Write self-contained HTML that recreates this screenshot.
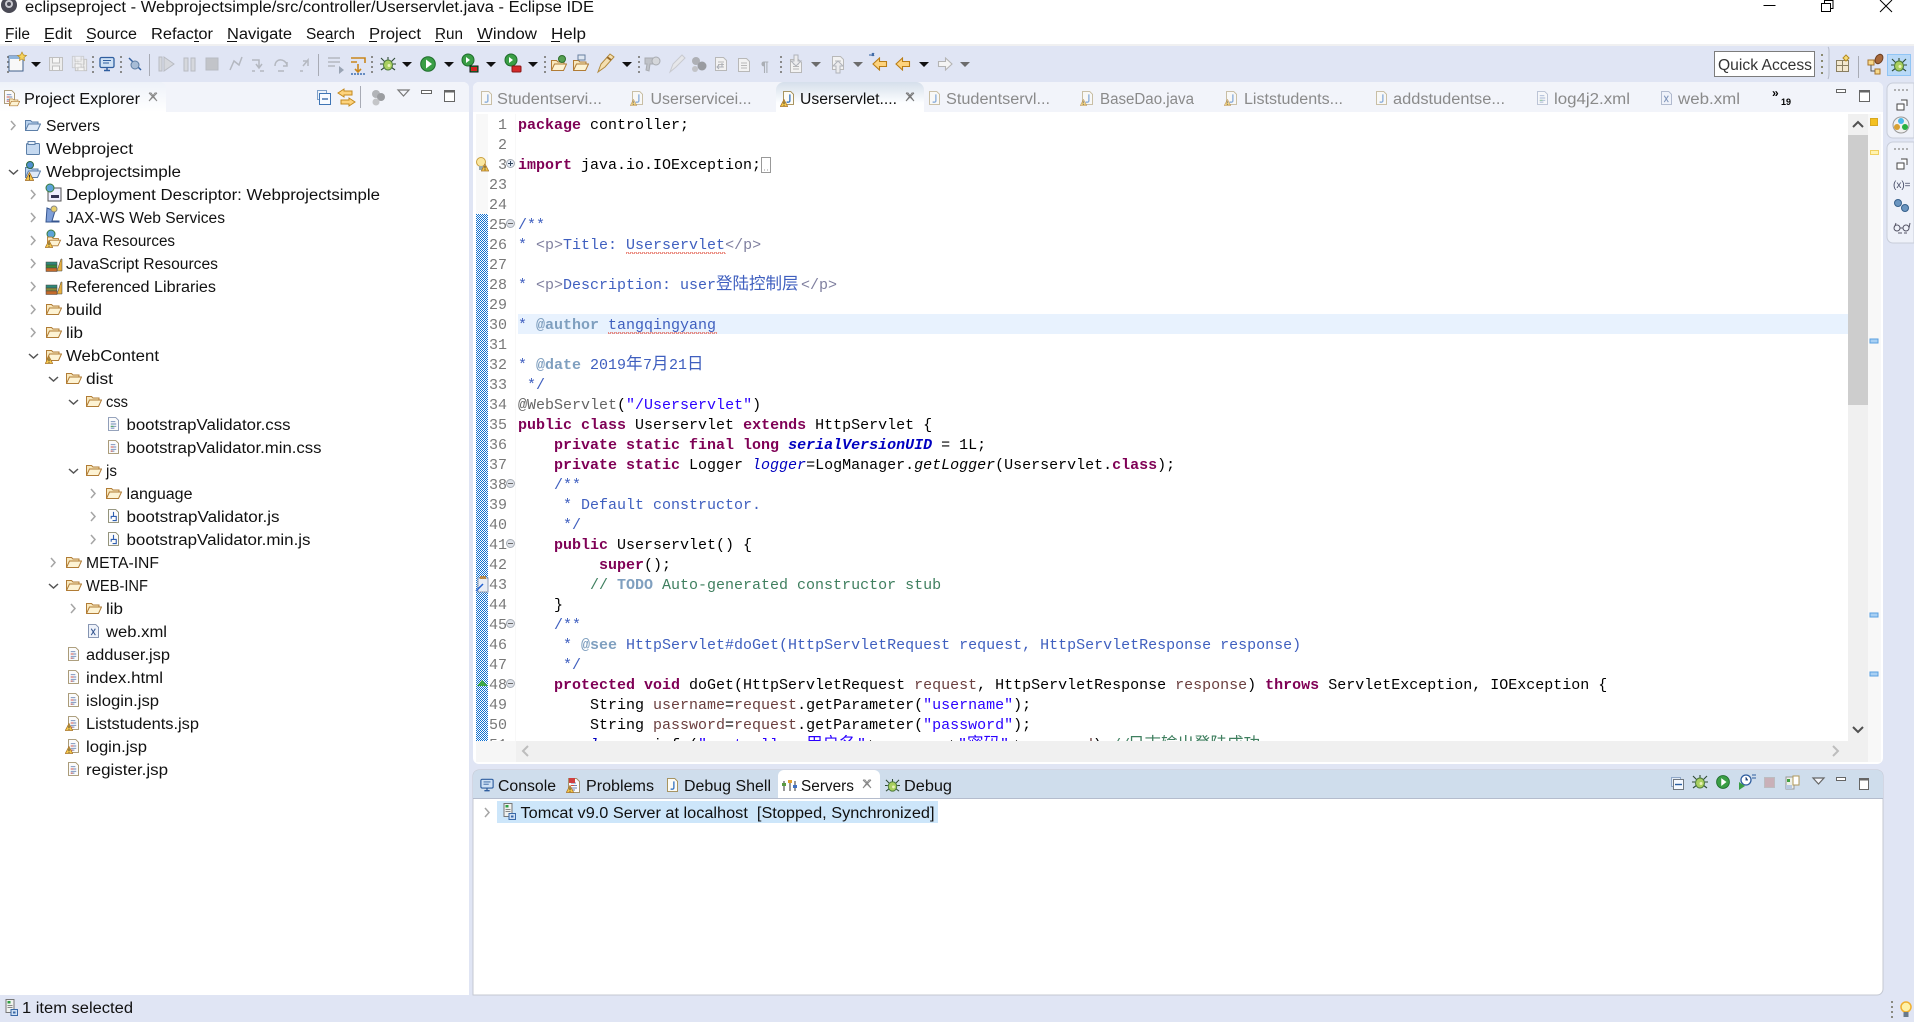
<!DOCTYPE html>
<html><head><meta charset="utf-8"><title>Eclipse IDE</title>
<style>
html,body{margin:0;padding:0;background:#e0e5f4;overflow:hidden}
svg{display:block}
.u{font-family:"Liberation Sans","Noto Sans CJK SC",sans-serif;font-size:15.5px;fill:#111}
.g{fill:#8a8a8a}
.c{font-family:"Liberation Mono","Noto Sans CJK SC",monospace;font-size:15px;fill:#000;white-space:pre}
.n{fill:#787878;text-anchor:end}
.k{fill:#7f0055;font-weight:bold}.j{fill:#3f5fbf}.t{fill:#7f9fbf;font-weight:bold}.h{fill:#7f7f9f}
.f{fill:#0000c0}.s{fill:#2a00ff}.m{fill:#3f7f5f}.v{fill:#6a3e3e}.a{fill:#646464}.i{font-style:italic}.b{font-weight:bold}
.cj{font-family:"Noto Sans CJK SC",sans-serif;font-size:16.5px}
</style></head><body>
<svg xmlns="http://www.w3.org/2000/svg" width="1914" height="1022" viewBox="0 0 1914 1022">
<defs>
<pattern id="dith" width="2" height="2" patternUnits="userSpaceOnUse"><rect width="2" height="2" fill="#fff"/><rect width="1" height="1" fill="#0f6fd0"/><rect x="1" y="1" width="1" height="1" fill="#0f6fd0"/></pattern>
<pattern id="sq" width="4" height="2" patternUnits="userSpaceOnUse"><path d="M0 2L1 0 2 0 3 2 4 2" fill="none" stroke="#e25a4a" stroke-width=".8"/></pattern>
<linearGradient id="act" x1="0" y1="0" x2="0" y2="1"><stop offset="0" stop-color="#d5dfeb"/><stop offset=".7" stop-color="#fdfeff"/><stop offset="1" stop-color="#fff"/></linearGradient>
<linearGradient id="act2" x1="0" y1="0" x2="0" y2="1"><stop offset="0" stop-color="#eef2f9"/><stop offset="1" stop-color="#fff"/></linearGradient>
<clipPath id="edclip"><rect x="473" y="112" width="1375" height="629"/></clipPath>
<symbol id="war" viewBox="0 0 8 8"><path d="M4 .5L7.7 7.5H.3z" fill="#f6c84a" stroke="#a9752a" stroke-width=".8"/><path d="M4 2.5v2.500M4 5.800v1" stroke="#333" stroke-width=".9"/></symbol>
<symbol id="fo" viewBox="0 0 16 16"><path d="M.5 13V3.500h5l1.500 1.500h6V7" fill="#f8e8bd" stroke="#b17c35"/><path d="M.5 13.500L3.500 7h12l-3 6.500z" fill="#fdf3d4" stroke="#b17c35"/></symbol>
<symbol id="fb" viewBox="0 0 16 16"><path d="M.5 13V3.500h5l1.500 1.500h6V7" fill="#b9d2ee" stroke="#5c7fa8"/><path d="M.5 13.500L3.500 7h12l-3 6.500z" fill="#dfeaf8" stroke="#5c7fa8"/></symbol>
<symbol id="pj" viewBox="0 0 16 16"><rect x="1.500" y="3.500" width="13" height="11" rx="1" fill="#c5d9f0" stroke="#5c7fa8"/><rect x="3" y="1.500" width="7" height="3" fill="#e6eff9" stroke="#5c7fa8"/></symbol>
<symbol id="tx" viewBox="0 0 12 15"><path d="M.5.5h8l3 3v11H.5z" fill="#fbfbfb" stroke="#a3926d"/><path d="M3 5h5M3 7.500h6M3 10h6M3 12h4" stroke="#6b86b6"/><path d="M3 7.500h3M3 12h2" stroke="#d0504a"/></symbol>
<symbol id="txb" viewBox="0 0 12 15"><path d="M.5.5h8l3 3v11H.5z" fill="#fbfbfb" stroke="#8796b3"/><path d="M3 5h5M3 7.500h6M3 10h6M3 12h4" stroke="#6b86b6"/><path d="M3 10h3" stroke="#3aa04a"/></symbol>
<symbol id="jsf" viewBox="0 0 12 15"><path d="M.5.5h8l3 3v11H.5z" fill="#fbfbfb" stroke="#8a8a70"/><path d="M6 3v5H3.500v2.500M6 8h3v4.500H5" fill="none" stroke="#2f5fb0" stroke-width="1.200"/></symbol>
<symbol id="xm" viewBox="0 0 12 15"><path d="M.5.5h8l3 3v11H.5z" fill="#eef2fa" stroke="#7b8bab"/><path d="M3.500 5l4.500 7M8 5l-4.500 7" stroke="#34558f" stroke-width="1.100"/></symbol>
<symbol id="jv" viewBox="0 0 12 15"><path d="M.5.5h8l3 3v11H.5z" fill="#fdfcf6" stroke="#a08a50"/><path d="M7.500 3.500v7c0 1.800-2.500 2-3.500 1" fill="none" stroke="#2f6fc0" stroke-width="1.400"/></symbol>
<symbol id="bug" viewBox="0 0 16 16"><path d="M1 2l4 4M15 2l-4 4M0 8h3M13 8h3M1 14l4-3M15 14l-4-3M8 1v3" stroke="#2f4a35" stroke-width="1.100"/><ellipse cx="8" cy="9" rx="4.500" ry="5" fill="#a9cf5f" stroke="#4c7a3a"/><circle cx="9" cy="9.500" r="1.500" fill="#e9f2b8"/></symbol>
<symbol id="run" viewBox="0 0 16 16"><circle cx="8" cy="8" r="7.300" fill="#3a9e45" stroke="#1f6d2c"/><path d="M6 3.500l6 4.500-6 4.500z" fill="#fff"/></symbol>
<symbol id="disk" viewBox="0 0 16 16"><path d="M1.500 1.500h13v13h-13z" fill="#ececec" stroke="#c0c0c0"/><path d="M4.500 2v5h7V2M4.500 14v-4h7v4" fill="#f6f6f6" stroke="#c0c0c0"/></symbol>
<symbol id="dgr" viewBox="0 0 14 16"><path d="M1.500 1.500h8l3 3v10h-11z" fill="#f2f2f2" stroke="#b8b8b8"/><path d="M4 6h6M4 8.500h6M4 11h6" stroke="#b8b8b8"/></symbol>
<symbol id="larr" viewBox="0 0 16 14"><path d="M7.500 1L1 7l6.500 6V9.500h7v-5h-7z" fill="#fdd37d" stroke="#b97d16" stroke-width="1.100"/></symbol>
<symbol id="rarr" viewBox="0 0 16 14"><path d="M8.500 1L15 7l-6.500 6V9.500h-7v-5h7z" fill="#f4f4f4" stroke="#b4b4b4" stroke-width="1.100"/></symbol>
<symbol id="srv" viewBox="0 0 13 17"><rect x="1" y=".5" width="8" height="13" fill="#f0f2f0" stroke="#777"/><rect x="2.500" y="2" width="3" height="2.500" fill="#2ea043"/><path d="M2.500 6.500h5M2.500 8.500h5" stroke="#888"/><rect x="6" y="10.500" width="6.500" height="6" fill="#cfe0f4" stroke="#3868a8"/><rect x="8" y="12.500" width="2.500" height="2" fill="#3868a8"/></symbol>
<symbol id="mon" viewBox="0 0 16 16"><rect x="1" y="1.500" width="14" height="10" rx="1.500" fill="#cfe1f5" stroke="#2f5e9f" stroke-width="1.300"/><path d="M4 4.500h8M4 7h6" stroke="#2f5e9f"/><path d="M5 14.500h6M8 11.500v3" stroke="#2f5e9f" stroke-width="1.500"/></symbol>
</defs>

<!-- base -->
<rect width="1914" height="1022" fill="#e0e5f4"/>
<rect width="1914" height="44" fill="#fff"/>
<rect y="44" width="1914" height="2" fill="#f0f0f1"/>

<!-- title bar -->
<circle cx="9" cy="5" r="8" fill="#4a4a55"/><circle cx="9" cy="4" r="4" fill="#c9c9cf"/><circle cx="9" cy="4" r="2" fill="#4a4a55"/>
<text class="u" x="25" y="12" textLength="569" lengthAdjust="spacingAndGlyphs">eclipseproject - Webprojectsimple/src/controller/Userservlet.java - Eclipse IDE</text>
<path d="M1763.500 5.500h12" stroke="#000" stroke-width="1"/>
<path d="M1821.500 3.500h9v8h-9zM1824.500 3V.5h8.500v8h-2.500" fill="none" stroke="#000"/>
<path d="M1880 0l12 12M1892 0l-12 12" stroke="#000"/>

<!-- menu -->
<text class="u" x="5" y="39" textLength="25" lengthAdjust="spacingAndGlyphs">File</text>
<text class="u" x="44" y="39" textLength="28" lengthAdjust="spacingAndGlyphs">Edit</text>
<text class="u" x="86" y="39" textLength="51" lengthAdjust="spacingAndGlyphs">Source</text>
<text class="u" x="151" y="39" textLength="62" lengthAdjust="spacingAndGlyphs">Refactor</text>
<text class="u" x="227" y="39" textLength="65" lengthAdjust="spacingAndGlyphs">Navigate</text>
<text class="u" x="306" y="39" textLength="49" lengthAdjust="spacingAndGlyphs">Search</text>
<text class="u" x="369" y="39" textLength="52" lengthAdjust="spacingAndGlyphs">Project</text>
<text class="u" x="435" y="39" textLength="28" lengthAdjust="spacingAndGlyphs">Run</text>
<text class="u" x="477" y="39" textLength="60" lengthAdjust="spacingAndGlyphs">Window</text>
<text class="u" x="551" y="39" textLength="35" lengthAdjust="spacingAndGlyphs">Help</text>
<path d="M5 41.500h7M44 41.500h7M86 41.500h8M194 41.500h5M227 41.500h10M327 41.500h7M369 41.500h8M435 41.500h8M477 41.500h13M551 41.500h9" stroke="#111"/>

<!-- toolbar -->
<g fill="none" stroke="#8a8a8a" stroke-width="2" stroke-dasharray="2 3">
<path d="M8 56v18M93 56v18M121 56v18M372 56v18M545 56v18M639 56v18M781 56v18"/>
</g>
<path d="M149.500 54v22M318.500 54v22" stroke="#a8abb5"/>
<path d="M8 56h14v15H8z" transform="translate(1 0)" fill="#f8f8f8" stroke="#3f5f8a"/><rect x="9" y="56" width="14" height="3" fill="#8fb4dc"/>
<path d="M22 52l1.500 3 3 .5-2.500 2 .5 3-2.500-1.500-2.500 1.500.5-3-2.500-2 3-.5z" fill="#f5d35e" stroke="#b58a22" stroke-width=".7"/>
<path d="M31 62h10l-5 5zM402 62h10l-5 5zM444 62h10l-5 5zM486 62h10l-5 5zM528 62h10l-5 5zM622 62h10l-5 5zM919 62h10l-5 5z" fill="#111"/>
<path d="M811 62h10l-5 5zM853 62h10l-5 5zM960 62h10l-5 5z" fill="#6c6c6c"/>
<use href="#disk" x="48" y="56" width="16" height="16"/>
<use href="#disk" x="74" y="58" width="14" height="14"/><use href="#disk" x="71" y="55" width="14" height="14" opacity=".7"/>
<use href="#mon" x="99" y="56" width="16" height="16"/>
<path d="M129 58l12 12" stroke="#2f5e9f" stroke-width="1.500"/><circle cx="135" cy="65" r="4" fill="#a7bcd6" stroke="#5d7da3"/>
<g fill="#d6d8dd" stroke="#b8bbc2">
<rect x="159" y="57" width="3" height="14"/><path d="M164 57l10 7-10 7z"/>
<rect x="184" y="58" width="4" height="13"/><rect x="191" y="58" width="4" height="13"/>
<rect x="206" y="58" width="12" height="12" fill="#c2c4c9"/>
</g>
<g fill="none" stroke="#b4b8c0" stroke-width="1.500">
<path d="M230 70l4-9 5 4 3-8"/>
<path d="M252 60h7v7m-3-3l3 4 3-4M252 71h3M260 71h4"/>
<path d="M275 66c0-8 10-8 12-1m0-3v4h-4M278 71h6"/>
<path d="M300 71h3M303 66l5-6v6m-5-5h5"/>
<path d="M328 58h12M328 62h12M328 66h7"/>
</g>
<path d="M339 66l5 4-5 4z" fill="#9aa4b4"/>
<path d="M351 58h14v5M351 62h6M358 64v8m-3-3l3 3 3-3" fill="none" stroke="#c9861c" stroke-width="1.600"/><path d="M351 74h14" stroke="#3d6eb0" stroke-width="1.500" stroke-dasharray="2 1"/>
<use href="#bug" x="380" y="56" width="16" height="16"/>
<use href="#run" x="420" y="56" width="16" height="16"/>
<circle cx="468" cy="60" r="6" fill="#3a9e45" stroke="#1f6d2c"/><path d="M466 57l4 3-4 3z" fill="#fff"/><rect x="470" y="66" width="8" height="6" fill="#1c9a2b" stroke="#111"/><rect x="471" y="67" width="6" height="4" fill="#d42020"/>
<circle cx="511" cy="60" r="6" fill="#3a9e45" stroke="#1f6d2c"/><path d="M509 57l4 3-4 3z" fill="#fff"/><rect x="512" y="66" width="9" height="6" rx="1" fill="#d42a2a" stroke="#8a1515"/>
<use href="#fo" x="551" y="57" width="16" height="16"/><circle cx="562" cy="59" r="3.500" fill="#55a052" stroke="#2f6d2c"/>
<use href="#fo" x="573" y="57" width="16" height="16"/><rect x="578" y="55" width="7" height="5" fill="#dfe7f2" stroke="#6880a0"/>
<path d="M598 72l3-8 9-10 4 3-9 10z" fill="#f4dfb0" stroke="#b28a3c"/><path d="M607 57l4 3" stroke="#9a6a2a" stroke-width="2"/>
<g fill="#bfc2c8" stroke="#a8abb1"><path d="M645 58h10v6h-5l-1 7-3-1 1-6h-2z"/><circle cx="656" cy="61" r="4" fill="#d5d7db"/></g>
<path d="M670 72l3-8 9-9 3 3-9 9z" fill="#e6e7ea" stroke="#c8cad0"/>
<circle cx="696" cy="61" r="4" fill="#aeb0b5"/><circle cx="702" cy="66" r="4.500" fill="#999ba0"/><circle cx="695" cy="69" r="3" fill="#c2c3c7"/>
<use href="#dgr" x="714" y="56" width="14" height="16"/><path d="M722 63v4h-5m2-2l-2 2 2 2" fill="none" stroke="#a9adb5"/>
<use href="#dgr" x="737" y="57" width="14" height="16"/>
<text class="u" x="761" y="71" style="font-size:14px;fill:#aaaeb4;font-weight:bold">¶</text>
<use href="#dgr" x="789" y="58" width="14" height="16"/><path d="M794 55h4v6h3l-5 5-5-5h3z" fill="#ececee" stroke="#b0b3ba"/>
<use href="#dgr" x="831" y="55" width="14" height="16"/><path d="M836 73h4v-7h3l-5-5-5 5h3z" fill="#ececee" stroke="#b0b3ba"/>
<use href="#larr" x="872" y="57" width="16" height="14"/><path d="M872 56l2-3M869 55h5M874 56l-2-3" stroke="#2f5e9f" stroke-width="1.100"/>
<use href="#larr" x="895" y="57" width="16" height="14"/>
<use href="#rarr" x="937" y="57" width="16" height="14"/>

<!-- quick access + perspectives -->
<rect x="1714.500" y="51.500" width="100" height="25" fill="#fff" stroke="#7c7c7c"/>
<text class="u" x="1718" y="70" textLength="94" lengthAdjust="spacingAndGlyphs" style="fill:#333">Quick Access</text>
<path d="M1822 54v24" stroke="#8a8a70" stroke-width="2" stroke-dasharray="2 4"/>
<path d="M1828 47c1 1 1 2 1 4v22c0 2 0 4-1 6" fill="none" stroke="#b5bac8"/>
<rect x="1836.500" y="60.500" width="12" height="11" fill="#f3e8cf" stroke="#8a7f62"/><path d="M1836 65.500h12M1842.500 61v10" stroke="#8a7f62"/><path d="M1849 58l-3-3-3 3 3 3z" fill="#f7de7a" stroke="#b58a22"/>
<path d="M1858.500 56v22" stroke="#a8abb5"/>
<rect x="1868" y="60" width="6" height="5" fill="#f7d98c" stroke="#a9752a"/><rect x="1875" y="69" width="5" height="5" fill="#f7d98c" stroke="#a9752a"/><path d="M1871 65v6h4" fill="none" stroke="#555"/><ellipse cx="1879" cy="59" rx="3.500" ry="5" transform="rotate(30 1879 59)" fill="#a8683a" stroke="#6e3f20"/>
<rect x="1887.500" y="54.500" width="23" height="21" fill="#b9d9f7" stroke="#90c5f5"/><use href="#bug" x="1891" y="57" width="16" height="16"/>

<!-- Project explorer panel -->
<path d="M0 82h463a6 6 0 0 1 6 6v907H0z" fill="#fff"/>
<path d="M0 82h463a6 6 0 0 1 6 6v24H0z" fill="#f2f4fa"/>
<path d="M0 82h160a6 6 0 0 1 6 6v24H0z" fill="url(#act2)"/>
<use href="#tx" x="4" y="90" width="11" height="14"/><use href="#fo" x="9" y="96" width="11" height="12"/>
<text class="u" x="24" y="104" textLength="116" lengthAdjust="spacingAndGlyphs">Project Explorer</text>
<path d="M149 93l8 8M157 93l-8 8M149 93h2l6 8M157 93h-2l-6 8" stroke="#888" fill="none"/>
<rect x="317.500" y="90.500" width="9" height="9" fill="#eef3fa" stroke="#7fa0c8"/><rect x="319.500" y="93.500" width="11" height="11" fill="#f8fbff" stroke="#3f75b5"/><path d="M322 99h6" stroke="#2a5ea0" stroke-width="1.300"/>
<path d="M344 89l-6 4 6 4v-2h8v-4h-8zM349 98l6 4-6 4v-2h-8v-4h8z" fill="#fdd37d" stroke="#c48a1e"/>
<path d="M360.500 86v22" stroke="#a8abb5"/>
<circle cx="376" cy="94" r="4" fill="#b2b4b8"/><circle cx="381" cy="97" r="4" fill="#9b9da1"/><circle cx="376" cy="102" r="3.500" fill="#c4c5c8"/>
<path d="M398 90h11l-5.500 6z" fill="#f4f6fb" stroke="#777" stroke-width="1.200"/>
<rect x="421.500" y="90.500" width="10" height="3" fill="#fff" stroke="#666"/>
<rect x="444.500" y="90.500" width="10" height="11" fill="#fff" stroke="#666"/><rect x="444" y="90" width="11" height="2.500" fill="#666"/>

<!-- tree chevrons -->
<g fill="none" stroke="#a5a5a5" stroke-width="1.500">
<path d="M11 121l4 4.500-4 4.500M31 190l4 4.500-4 4.500M31 213l4 4.500-4 4.500M31 236l4 4.500-4 4.500M31 259l4 4.500-4 4.500M31 282l4 4.500-4 4.500M31 305l4 4.500-4 4.500M31 328l4 4.500-4 4.500M91 489l4 4.500-4 4.500M91 512l4 4.500-4 4.500M91 535l4 4.500-4 4.500M51 558l4 4.500-4 4.500M71 604l4 4.500-4 4.500"/>
</g>
<g fill="none" stroke="#555" stroke-width="1.500">
<path d="M9 170l4.500 4 4.500-4M29 354l4.500 4 4.500-4M49 377l4.500 4 4.500-4M69 400l4.500 4 4.500-4M69 469l4.500 4 4.500-4M49 584l4.500 4 4.500-4"/>
</g>

<!-- tree icons -->
<use href="#fb" x="25" y="117" width="16" height="16"/>
<use href="#pj" x="25" y="140" width="16" height="16"/>
<use href="#fb" x="25" y="164" width="16" height="16"/><circle cx="30" cy="165" r="3.500" fill="#4f8fd0" stroke="#2c6a3f"/><use href="#war" x="25" y="172" width="9" height="9"/>
<rect x="48" y="188" width="13" height="13" fill="#eef" stroke="#555"/><circle cx="50" cy="188" r="4" fill="#5ca3d8" stroke="#3b7a3b"/><path d="M51 195h8v3h-8z" fill="#335"/>
<path d="M47 208l8 3-3 10h7v1H46z" fill="#7f9fd8" stroke="#35558f"/><circle cx="54" cy="209" r="3" fill="#e8d06a" stroke="#888"/>
<circle cx="51" cy="234" r="4" fill="#5ca3d8" stroke="#3b7a3b"/><use href="#fo" x="46" y="234" width="16" height="14"/><use href="#war" x="45" y="240" width="8" height="8"/>
<g stroke="#444" stroke-width=".5"><rect x="46" y="262" width="11" height="3" fill="#2e8a7a"/><rect x="46" y="265" width="11" height="3" fill="#3a8a3a"/><rect x="46" y="268" width="11" height="3.500" fill="#c46a2a"/><path d="M57 271l4-12 1 0 0 0 0 12z" fill="#e8b040"/></g>
<g stroke="#444" stroke-width=".5"><rect x="46" y="285" width="11" height="3" fill="#2e8a7a"/><rect x="46" y="288" width="11" height="3" fill="#8a8a3a"/><rect x="46" y="291" width="11" height="3.500" fill="#c46a2a"/><path d="M57 294l4-12 1 0 0 0 0 12z" fill="#e8b040"/></g>
<use href="#fo" x="46" y="301" width="16" height="16"/>
<use href="#fo" x="46" y="324" width="16" height="16"/>
<use href="#fo" x="46" y="347" width="16" height="16"/><use href="#war" x="45" y="356" width="8" height="8"/>
<use href="#fo" x="66" y="370" width="16" height="16"/>
<use href="#fo" x="86" y="393" width="16" height="16"/>
<use href="#txb" x="108" y="417" width="11" height="14"/>
<use href="#tx" x="108" y="440" width="11" height="14"/>
<use href="#fo" x="86" y="462" width="16" height="16"/>
<use href="#fo" x="106" y="485" width="16" height="16"/>
<use href="#jsf" x="108" y="509" width="11" height="14"/>
<use href="#jsf" x="108" y="532" width="11" height="14"/>
<use href="#fo" x="66" y="554" width="16" height="16"/>
<use href="#fo" x="66" y="577" width="16" height="16"/>
<use href="#fo" x="86" y="600" width="16" height="16"/>
<use href="#xm" x="88" y="624" width="11" height="14"/>
<use href="#tx" x="68" y="647" width="11" height="14"/>
<use href="#tx" x="68" y="670" width="11" height="14"/>
<use href="#tx" x="68" y="693" width="11" height="14"/>
<use href="#tx" x="68" y="716" width="11" height="14"/><use href="#war" x="65" y="723" width="8" height="8"/>
<use href="#tx" x="68" y="739" width="11" height="14"/><use href="#war" x="65" y="746" width="8" height="8"/>
<use href="#tx" x="68" y="762" width="11" height="14"/>

<!-- tree text -->
<text class="u" x="46" y="131" textLength="54" lengthAdjust="spacingAndGlyphs">Servers</text>
<text class="u" x="46" y="154" textLength="87" lengthAdjust="spacingAndGlyphs">Webproject</text>
<text class="u" x="46" y="177" textLength="135" lengthAdjust="spacingAndGlyphs">Webprojectsimple</text>
<text class="u" x="66" y="200" textLength="314" lengthAdjust="spacingAndGlyphs">Deployment Descriptor: Webprojectsimple</text>
<text class="u" x="66" y="223" textLength="159" lengthAdjust="spacingAndGlyphs">JAX-WS Web Services</text>
<text class="u" x="66" y="246" textLength="109" lengthAdjust="spacingAndGlyphs">Java Resources</text>
<text class="u" x="66" y="269" textLength="152" lengthAdjust="spacingAndGlyphs">JavaScript Resources</text>
<text class="u" x="66" y="292" textLength="150" lengthAdjust="spacingAndGlyphs">Referenced Libraries</text>
<text class="u" x="66" y="315" textLength="36" lengthAdjust="spacingAndGlyphs">build</text>
<text class="u" x="66" y="338" textLength="17" lengthAdjust="spacingAndGlyphs">lib</text>
<text class="u" x="66" y="361" textLength="93" lengthAdjust="spacingAndGlyphs">WebContent</text>
<text class="u" x="86" y="384" textLength="27" lengthAdjust="spacingAndGlyphs">dist</text>
<text class="u" x="106" y="407" textLength="22" lengthAdjust="spacingAndGlyphs">css</text>
<text class="u" x="126.500" y="430" textLength="164" lengthAdjust="spacingAndGlyphs">bootstrapValidator.css</text>
<text class="u" x="126.500" y="453" textLength="195" lengthAdjust="spacingAndGlyphs">bootstrapValidator.min.css</text>
<text class="u" x="106" y="476" textLength="11" lengthAdjust="spacingAndGlyphs">js</text>
<text class="u" x="126.500" y="499" textLength="66" lengthAdjust="spacingAndGlyphs">language</text>
<text class="u" x="126.500" y="522" textLength="153" lengthAdjust="spacingAndGlyphs">bootstrapValidator.js</text>
<text class="u" x="126.500" y="545" textLength="184" lengthAdjust="spacingAndGlyphs">bootstrapValidator.min.js</text>
<text class="u" x="86" y="568" textLength="73" lengthAdjust="spacingAndGlyphs">META-INF</text>
<text class="u" x="86" y="591" textLength="62" lengthAdjust="spacingAndGlyphs">WEB-INF</text>
<text class="u" x="106" y="614" textLength="17" lengthAdjust="spacingAndGlyphs">lib</text>
<text class="u" x="106" y="637" textLength="61" lengthAdjust="spacingAndGlyphs">web.xml</text>
<text class="u" x="86" y="660" textLength="84" lengthAdjust="spacingAndGlyphs">adduser.jsp</text>
<text class="u" x="86" y="683" textLength="77" lengthAdjust="spacingAndGlyphs">index.html</text>
<text class="u" x="86" y="706" textLength="73" lengthAdjust="spacingAndGlyphs">islogin.jsp</text>
<text class="u" x="86" y="729" textLength="113" lengthAdjust="spacingAndGlyphs">Liststudents.jsp</text>
<text class="u" x="86" y="752" textLength="61" lengthAdjust="spacingAndGlyphs">login.jsp</text>
<text class="u" x="86" y="775" textLength="82" lengthAdjust="spacingAndGlyphs">register.jsp</text>

<!-- Editor panel -->
<path d="M479 82h1398a6 6 0 0 1 6 6v670a6 6 0 0 1-6 6H479a6 6 0 0 1-6-6V88a6 6 0 0 1 6-6z" fill="#fff"/>
<path d="M479 82h1398a6 6 0 0 1 6 6v24H473V88a6 6 0 0 1 6-6z" fill="#f2f4fa"/>
<path d="M776 112V90a8 8 0 0 1 8-8h132a8 8 0 0 1 8 8v22z" fill="url(#act)"/>

<use href="#jv" x="481" y="91" width="11" height="14" opacity=".55"/>
<text class="u g" x="497" y="104" textLength="105" lengthAdjust="spacingAndGlyphs">Studentservi...</text>
<use href="#jv" x="632" y="91" width="11" height="14" opacity=".55"/><use href="#war" x="630" y="99" width="7" height="7" opacity=".6"/>
<text class="u g" x="650.500" y="104" textLength="101" lengthAdjust="spacingAndGlyphs">Userservicei...</text>
<use href="#jv" x="783" y="91" width="11" height="14"/><use href="#war" x="780" y="99" width="8" height="8"/>
<text class="u" x="800" y="104" textLength="97" lengthAdjust="spacingAndGlyphs">Userservlet....</text>
<path d="M906 93l8 8M914 93l-8 8M906 93h2l6 8M914 93h-2l-6 8" stroke="#777" fill="none"/>
<use href="#jv" x="929" y="91" width="11" height="14" opacity=".55"/>
<text class="u g" x="946" y="104" textLength="104" lengthAdjust="spacingAndGlyphs">Studentservl...</text>
<use href="#jv" x="1082" y="91" width="11" height="14" opacity=".55"/><use href="#war" x="1080" y="99" width="7" height="7" opacity=".6"/>
<text class="u g" x="1100" y="104" textLength="94" lengthAdjust="spacingAndGlyphs">BaseDao.java</text>
<use href="#jv" x="1226" y="91" width="11" height="14" opacity=".55"/><use href="#war" x="1224" y="99" width="7" height="7" opacity=".6"/>
<text class="u g" x="1244" y="104" textLength="99" lengthAdjust="spacingAndGlyphs">Liststudents...</text>
<use href="#jv" x="1376" y="91" width="11" height="14" opacity=".55"/>
<text class="u g" x="1393" y="104" textLength="112" lengthAdjust="spacingAndGlyphs">addstudentse...</text>
<use href="#txb" x="1537" y="91" width="11" height="14" opacity=".55"/>
<text class="u g" x="1554" y="104" textLength="76" lengthAdjust="spacingAndGlyphs">log4j2.xml</text>
<use href="#xm" x="1661" y="91" width="11" height="14" opacity=".6"/>
<text class="u g" x="1678" y="104" textLength="62" lengthAdjust="spacingAndGlyphs">web.xml</text>
<text x="1772" y="97" style="font:bold 12px 'Liberation Sans',sans-serif;fill:#000">»</text>
<text x="1781" y="105" style="font:bold 9px 'Liberation Sans',sans-serif;fill:#000">19</text>
<rect x="1836.500" y="89.500" width="9" height="3" fill="#fff" stroke="#666"/>
<rect x="1859.500" y="90.500" width="10" height="11" fill="#fff" stroke="#666"/><rect x="1859" y="90" width="11" height="2.500" fill="#666"/>

<!-- gutter -->
<rect x="476" y="114" width="12" height="100" fill="#f8f8f8"/>
<rect x="476" y="214" width="12" height="527" fill="url(#dith)"/>
<rect x="515" y="114" width="1" height="627" fill="#f8f8f8"/>
<rect x="518" y="314" width="1330" height="20" fill="#e8f2fe"/>

<!-- annotations -->
<circle cx="481" cy="162" r="4.500" fill="#fbe7a0" stroke="#c9a03e"/><rect x="479" y="166" width="4" height="4" fill="#9aa"/><use href="#war" x="481" y="163" width="8" height="9"/>
<rect x="478" y="578" width="10" height="14" fill="#e8edf5" stroke="#8d9ab0"/><rect x="480" y="576" width="6" height="3" fill="#b98a4a"/><path d="M476 591l7-7" stroke="#2060d0" stroke-width="1.500"/>
<path d="M477 686l5-6 6 6z" fill="#3fa845"/>

<!-- fold markers -->
<g fill="#dfe3ea" stroke="#a8adb5"><circle cx="510.500" cy="163.500" r="4" fill="#e4ebf5"/><circle cx="510.500" cy="223.500" r="4"/><circle cx="510.500" cy="483.500" r="4"/><circle cx="510.500" cy="543.500" r="4"/><circle cx="510.500" cy="623.500" r="4"/><circle cx="510.500" cy="683.500" r="4"/></g>
<path d="M508 163.500h5M510.500 161v5" stroke="#31445c"/><path d="M508 223.500h5M508 483.500h5M508 543.500h5M508 623.500h5M508 683.500h5" stroke="#666"/>

<g clip-path="url(#edclip)"><g transform="translate(0 -1)">
<!-- line numbers -->
<text class="c n" x="507" y="130">1</text><text class="c n" x="507" y="150">2</text><text class="c n" x="507" y="170">3</text><text class="c n" x="507" y="190">23</text><text class="c n" x="507" y="210">24</text><text class="c n" x="507" y="230">25</text><text class="c n" x="507" y="250">26</text><text class="c n" x="507" y="270">27</text><text class="c n" x="507" y="290">28</text><text class="c n" x="507" y="310">29</text><text class="c n" x="507" y="330">30</text><text class="c n" x="507" y="350">31</text><text class="c n" x="507" y="370">32</text><text class="c n" x="507" y="390">33</text><text class="c n" x="507" y="410">34</text><text class="c n" x="507" y="430">35</text><text class="c n" x="507" y="450">36</text><text class="c n" x="507" y="470">37</text><text class="c n" x="507" y="490">38</text><text class="c n" x="507" y="510">39</text><text class="c n" x="507" y="530">40</text><text class="c n" x="507" y="550">41</text><text class="c n" x="507" y="570">42</text><text class="c n" x="507" y="590">43</text><text class="c n" x="507" y="610">44</text><text class="c n" x="507" y="630">45</text><text class="c n" x="507" y="650">46</text><text class="c n" x="507" y="670">47</text><text class="c n" x="507" y="690">48</text><text class="c n" x="507" y="710">49</text><text class="c n" x="507" y="730">50</text><text class="c n" x="507" y="750">51</text>

<!-- code -->
<text class="c" x="518" y="130"><tspan class="k">package</tspan> controller;</text>
<text class="c" x="518" y="170"><tspan class="k">import</tspan> java.io.IOException;</text>
<rect x="761.500" y="158.500" width="9" height="15" fill="#fff" stroke="#999"/><path d="M764 171h1M767 171h1" stroke="#999"/>
<text class="c j" x="518" y="230">/**</text>
<text class="c j" x="518" y="250">* <tspan class="h">&lt;p&gt;</tspan>Title: Userservlet<tspan class="h">&lt;/p&gt;</tspan></text>
<rect x="626" y="253" width="100" height="2" fill="url(#sq)"/>
<text class="c j" x="518" y="290">* <tspan class="h">&lt;p&gt;</tspan>Description: user</text>
<text class="cj j" x="716" y="290">登陆控制层</text>
<text class="c h" x="801" y="290">&lt;/p&gt;</text>
<text class="c j" x="518" y="330">* <tspan class="t">@author</tspan> tangqingyang</text>
<rect x="608" y="333" width="109" height="2" fill="url(#sq)"/>
<text class="c j" x="518" y="370">* <tspan class="t">@date</tspan> 2019</text>
<text class="cj j" x="626" y="370">年</text><text class="c j" x="643" y="370">7</text><text class="cj j" x="652" y="370">月</text><text class="c j" x="669" y="370">21</text><text class="cj j" x="687" y="370">日</text>
<text class="c j" x="527" y="390">*/</text>
<text class="c a" x="518" y="410">@WebServlet<tspan fill="#000">(</tspan><tspan class="s">"/Userservlet"</tspan><tspan fill="#000">)</tspan></text>
<text class="c" x="518" y="430"><tspan class="k">public class</tspan> Userservlet <tspan class="k">extends</tspan> HttpServlet {</text>
<text class="c" x="554" y="450"><tspan class="k">private static final long</tspan> <tspan class="f i b">serialVersionUID</tspan> = 1L;</text>
<text class="c" x="554" y="470"><tspan class="k">private static</tspan> Logger <tspan class="f i">logger</tspan>=LogManager.<tspan class="i">getLogger</tspan>(Userservlet.<tspan class="k">class</tspan>);</text>
<text class="c j" x="554" y="490">/**</text>
<text class="c j" x="563" y="510">* Default constructor.</text>
<text class="c j" x="563" y="530">*/</text>
<text class="c" x="554" y="550"><tspan class="k">public</tspan> Userservlet() {</text>
<text class="c" x="599" y="570"><tspan class="k">super</tspan>();</text>
<text class="c m" x="590" y="590">// <tspan class="t">TODO</tspan> Auto-generated constructor stub</text>
<text class="c" x="554" y="610">}</text>
<text class="c j" x="554" y="630">/**</text>
<text class="c j" x="563" y="650">* <tspan class="t">@see</tspan> HttpServlet#doGet(HttpServletRequest request, HttpServletResponse response)</text>
<text class="c j" x="563" y="670">*/</text>
<text class="c" x="554" y="690"><tspan class="k">protected void</tspan> doGet(HttpServletRequest <tspan class="v">request</tspan>, HttpServletResponse <tspan class="v">response</tspan>) <tspan class="k">throws</tspan> ServletException, IOException {</text>
<text class="c" x="590" y="710">String <tspan class="v">username</tspan>=<tspan class="v">request</tspan>.getParameter(<tspan class="s">"username"</tspan>);</text>
<text class="c" x="590" y="730">String <tspan class="v">password</tspan>=<tspan class="v">request</tspan>.getParameter(<tspan class="s">"password"</tspan>);</text>
<text class="c" x="590" y="750"><tspan class="f i">logger</tspan>.info(<tspan class="s">"controller</tspan></text>
<text class="cj s" x="806" y="750">用户名</text><text class="c s" x="857" y="750">"</text>
<text class="c" x="866" y="750">+<tspan class="v">username</tspan>+</text>
<text class="c s" x="958" y="750">"</text><text class="cj s" x="967" y="750">密码</text><text class="c s" x="1000" y="750">"</text>
<text class="c" x="1012" y="750">+<tspan class="v">password</tspan>);</text>
<text class="c m" x="1112" y="750">//</text><text class="cj m" x="1128" y="750">日志输出登陆成功</text>
</g></g>

<!-- vertical scrollbar and overview -->
<rect x="1868" y="114" width="13" height="648" fill="#f8f8f8"/>
<rect x="1848" y="114" width="20" height="627" fill="#f0f0f0"/>
<rect x="1848" y="135" width="20" height="270" fill="#cdcdcd"/>
<path d="M1853 127l5-5 5 5M1853 727l5 5 5-5" fill="none" stroke="#505050" stroke-width="2"/>
<rect x="1870.500" y="118.500" width="7" height="7" fill="#f4c020" stroke="#d8a820"/>
<rect x="1870.500" y="150.500" width="8" height="4" fill="#fff3b0" stroke="#f0d060"/>
<rect x="1870" y="339" width="8" height="4" fill="#a8d0f4" stroke="#5aa0e0"/>
<rect x="1870" y="613" width="8" height="4" fill="#a8d0f4" stroke="#5aa0e0"/>
<rect x="1870" y="672" width="8" height="4" fill="#a8d0f4" stroke="#5aa0e0"/>
<!-- horizontal scrollbar -->
<rect x="476" y="741" width="1392" height="21" fill="#f0f0f0"/>
<rect x="476" y="741" width="40" height="21" fill="#f6f6f6"/>
<path d="M528 746l-5 5 5 5M1833 746l5 5-5 5" fill="none" stroke="#bdbdbd" stroke-width="2"/>

<!-- right trim -->
<path d="M1914 83h-21a6 6 0 0 0-6 6v43a6 6 0 0 0 6 6h21z" fill="#eef1f9" stroke="#c8cdd9"/>
<path d="M1914 142h-21a6 6 0 0 0-6 6v89a6 6 0 0 0 6 6h21z" fill="#eef1f9" stroke="#c8cdd9"/>
<path d="M1894 90h16M1894 149h16" stroke="#999" stroke-width="1.500" stroke-dasharray="2 2"/>
<path d="M1901 100h6v6M1897 104h7v6h-7z" fill="#fff" stroke="#444"/>
<path d="M1901 159h6v6M1897 163h7v6h-7z" fill="#fff" stroke="#444"/>
<circle cx="1901" cy="125" r="8" fill="#f0f0f0" stroke="#999"/><circle cx="1901" cy="121" r="3" fill="#4cb8e8"/><circle cx="1897" cy="127" r="3" fill="#d8a030"/><circle cx="1905" cy="127" r="3" fill="#28b040"/>
<text x="1893" y="188" style="font:10px 'Liberation Sans',sans-serif;fill:#444a66">(x)=</text>
<circle cx="1898" cy="203" r="3.500" fill="#6a95c0" stroke="#37618c"/><circle cx="1905" cy="208" r="3.500" fill="#6a95c0" stroke="#37618c"/>
<path d="M1894 228a3 3 0 1 0 6 0 3 3 0 1 0-6 0M1903 228a3 3 0 1 0 6 0 3 3 0 1 0-6 0M1900 228h3M1894 228l2-5M1909 228l1-5" fill="none" stroke="#556"/><path d="M1898 233h4M1904 233h3" stroke="#556"/>

<!-- bottom panel -->
<path d="M479 770h1398a6 6 0 0 1 6 6v213a6 6 0 0 1-6 6H473V776a6 6 0 0 1 6-6z" fill="#fff" stroke="#c4c8d2"/>
<path d="M479 770h1398a6 6 0 0 1 6 6v22H473v-22a6 6 0 0 1 6-6z" fill="#cfddec"/>
<path d="M473 798.500h1410" stroke="#b4bccd"/>
<path d="M778 798V776a6 6 0 0 1 6-6h90a6 6 0 0 1 6 6v22z" fill="#fff"/>
<use href="#mon" x="480" y="778" width="14" height="14"/>
<text class="u" x="498" y="791" textLength="58" lengthAdjust="spacingAndGlyphs">Console</text>
<use href="#tx" x="568" y="778" width="12" height="15"/><path d="M569 778h6v5h-6z" fill="#d04040"/><use href="#war" x="566" y="785" width="8" height="8"/>
<text class="u" x="586" y="791" textLength="68" lengthAdjust="spacingAndGlyphs">Problems</text>
<use href="#jv" x="667" y="778" width="11" height="14"/>
<text class="u" x="684" y="791" textLength="87" lengthAdjust="spacingAndGlyphs">Debug Shell</text>
<path d="M784 781v10M790 781v10M795 781v10" stroke="#555" stroke-width="1.200"/><rect x="782" y="783" width="4" height="3" fill="#5a9a40"/><rect x="788" y="780" width="4" height="3" fill="#e0a030"/><rect x="793" y="785" width="4" height="3" fill="#4070c0"/>
<text class="u" x="801" y="791" textLength="53" lengthAdjust="spacingAndGlyphs">Servers</text>
<path d="M863 780l8 8M871 780l-8 8M863 780h2l6 8M871 780h-2l-6 8" stroke="#888" fill="none"/>
<use href="#bug" x="885" y="778" width="15" height="15"/>
<text class="u" x="904" y="791" textLength="48" lengthAdjust="spacingAndGlyphs">Debug</text>

<rect x="1671.500" y="777.500" width="9" height="9" fill="#e2ebf6" stroke="#90a8c8"/><rect x="1673.500" y="779.500" width="10" height="10" fill="#f5f9ff" stroke="#707880"/><path d="M1675 784.500h7" stroke="#2a5ea0" stroke-width="1.400"/>
<use href="#bug" x="1692" y="774" width="16" height="16"/>
<use href="#run" x="1716" y="775" width="14" height="14"/>
<circle cx="1746" cy="780" r="5" fill="#fff" stroke="#2f5e9f" stroke-width="1.300"/><path d="M1746 777v3h2M1752 775h4M1752 778h4" stroke="#2f5e9f"/><path d="M1739 782l6 4-6 4z" fill="#3a9e45"/>
<rect x="1764.500" y="777.500" width="10" height="10" fill="#c9b0b8" stroke="#bcbcc0"/>
<rect x="1786" y="777" width="8" height="12" fill="#eef0e8" stroke="#999"/><path d="M1793 776h6v9h-6z" fill="#fff" stroke="#b09858"/><rect x="1787" y="779" width="3" height="3" fill="#40a040"/><rect x="1786" y="785" width="6" height="4" fill="#b8c8e0"/>
<path d="M1813 778h11l-5.500 6z" fill="#f4f6fb" stroke="#666" stroke-width="1.200"/>
<rect x="1836.500" y="777.500" width="9" height="3" fill="#fff" stroke="#666"/>
<rect x="1859.500" y="778.500" width="9" height="11" fill="#fff" stroke="#666"/><rect x="1859" y="778" width="10" height="2.500" fill="#666"/>

<path d="M485 808l4 4.500-4 4.500" fill="none" stroke="#a5a5a5" stroke-width="1.500"/>
<rect x="497" y="801" width="441" height="22" fill="#cde6fa"/>
<use href="#srv" x="503" y="803" width="13" height="17"/>
<text class="u" x="520.500" y="818" textLength="414" lengthAdjust="spacingAndGlyphs" style="white-space:pre">Tomcat v9.0 Server at localhost  [Stopped, Synchronized]</text>

<!-- status bar -->
<use href="#srv" x="5" y="999" width="13" height="17"/>
<text class="u" x="22" y="1013" textLength="111" lengthAdjust="spacingAndGlyphs">1 item selected</text>
<path d="M1892 1001v20" stroke="#8a8a80" stroke-width="2" stroke-dasharray="2 3"/>
<circle cx="1906" cy="1007" r="5" fill="#fff2a8" stroke="#f0b030" stroke-width="1.500"/><rect x="1903.500" y="1012" width="5" height="5" fill="#6a7a8a"/>
</svg>
</body></html>
